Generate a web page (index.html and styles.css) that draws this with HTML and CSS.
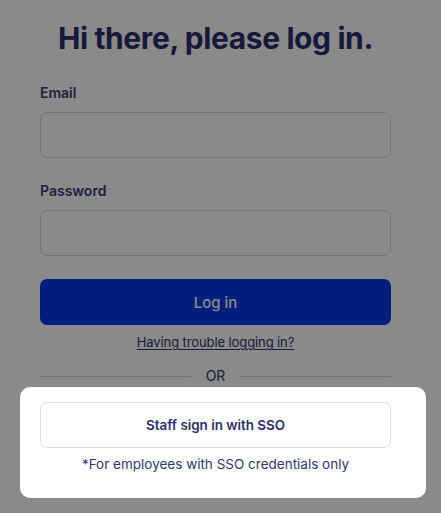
FILE: index.html
```html
<!DOCTYPE html>
<html lang="en">
<head>
<meta charset="utf-8">
<title>Log in</title>
<link rel="stylesheet" href="styles.css">
</head>
<body>
<main class="page">
  <h1 class="title">Hi there, please log in.</h1>
  <form class="form">
    <label class="label" for="email">Email</label>
    <input class="input" id="email" type="email">
    <label class="label label-pw" for="password">Password</label>
    <input class="input" id="password" type="password">
    <button class="btn-primary" type="button">Log in</button>
  </form>
  <a class="trouble" href="#">Having trouble logging in?</a>
  <div class="divider"><span class="line"></span><span class="or">OR</span><span class="line"></span></div>
  <section class="sso">
    <button class="btn-sso" type="button">Staff sign in with SSO</button>
    <p class="sso-note">*For employees with SSO credentials only</p>
  </section>
</main>
</body>
</html>
```
FILE: styles.css
```css
html {
  overflow: hidden;
  background: #ffffff;
}
body {
  margin: 0;
  padding: 0;
  min-height: 513px;
  font-family: "Inter", "Lato", sans-serif;
  color: #33356f;
}
.page {
  width: 351px;
  padding: 20px 50px 0 40px;
  display: flex;
  flex-direction: column;
}
.title {
  margin: 0;
  font-size: 30px;
  line-height: 36px;
  font-weight: 700;
  letter-spacing: -0.4px;
  text-align: center;
  color: #2e2f6c;
}
.form {
  display: flex;
  flex-direction: column;
  margin-top: 27px;
}
.label {
  font-size: 14px;
  line-height: 20px;
  font-weight: 600;
  color: #3a3b76;
  margin-bottom: 9px;
}
.label-pw {
  margin-top: 23px;
}
.input {
  box-sizing: border-box;
  height: 46px;
  width: 100%;
  border: 1px solid #d6d6e2;
  border-radius: 7px;
  background: #fff;
  margin: 0;
}
.btn-primary {
  margin-top: 23px;
  height: 46px;
  border: 0;
  border-radius: 7px;
  background: #0038e8;
  color: #ffffff;
  font-family: inherit;
  font-size: 15px;
  font-weight: 500;
}
.trouble {
  align-self: center;
  margin-top: 7px;
  font-size: 13px;
  line-height: 20px;
  letter-spacing: -0.1px;
  color: #33356f;
  text-decoration: underline;
  text-underline-offset: 2px;
}
.divider {
  margin-top: 14px;
  display: flex;
  align-items: center;
  gap: 15px;
  height: 20px;
}
.line {
  flex: 1;
  height: 1px;
  background: #d6d6e2;
}
.or {
  font-size: 14px;
  line-height: 20px;
  color: #33356f;
}
.sso {
  position: relative;
  z-index: 1;
  margin-top: 16px;
  display: flex;
  flex-direction: column;
}
.sso::before {
  content: "";
  position: absolute;
  left: -20px;
  right: -35px;
  top: -15px;
  bottom: -24px;
  background: #ffffff;
  border-radius: 10px;
  box-shadow: 0 0 0 3000px rgba(0, 0, 0, 0.46);
  z-index: -1;
}
.btn-sso {
  height: 46px;
  box-sizing: border-box;
  border: 1px solid #dcdce8;
  border-radius: 7px;
  background: #fff;
  font-family: inherit;
  font-size: 13.4px;
  font-weight: 600;
  color: #2d2f6b;
}
.sso-note {
  margin: 6px 0 0;
  font-size: 13.5px;
  line-height: 20px;
  text-align: center;
  color: #33356f;
}
```
